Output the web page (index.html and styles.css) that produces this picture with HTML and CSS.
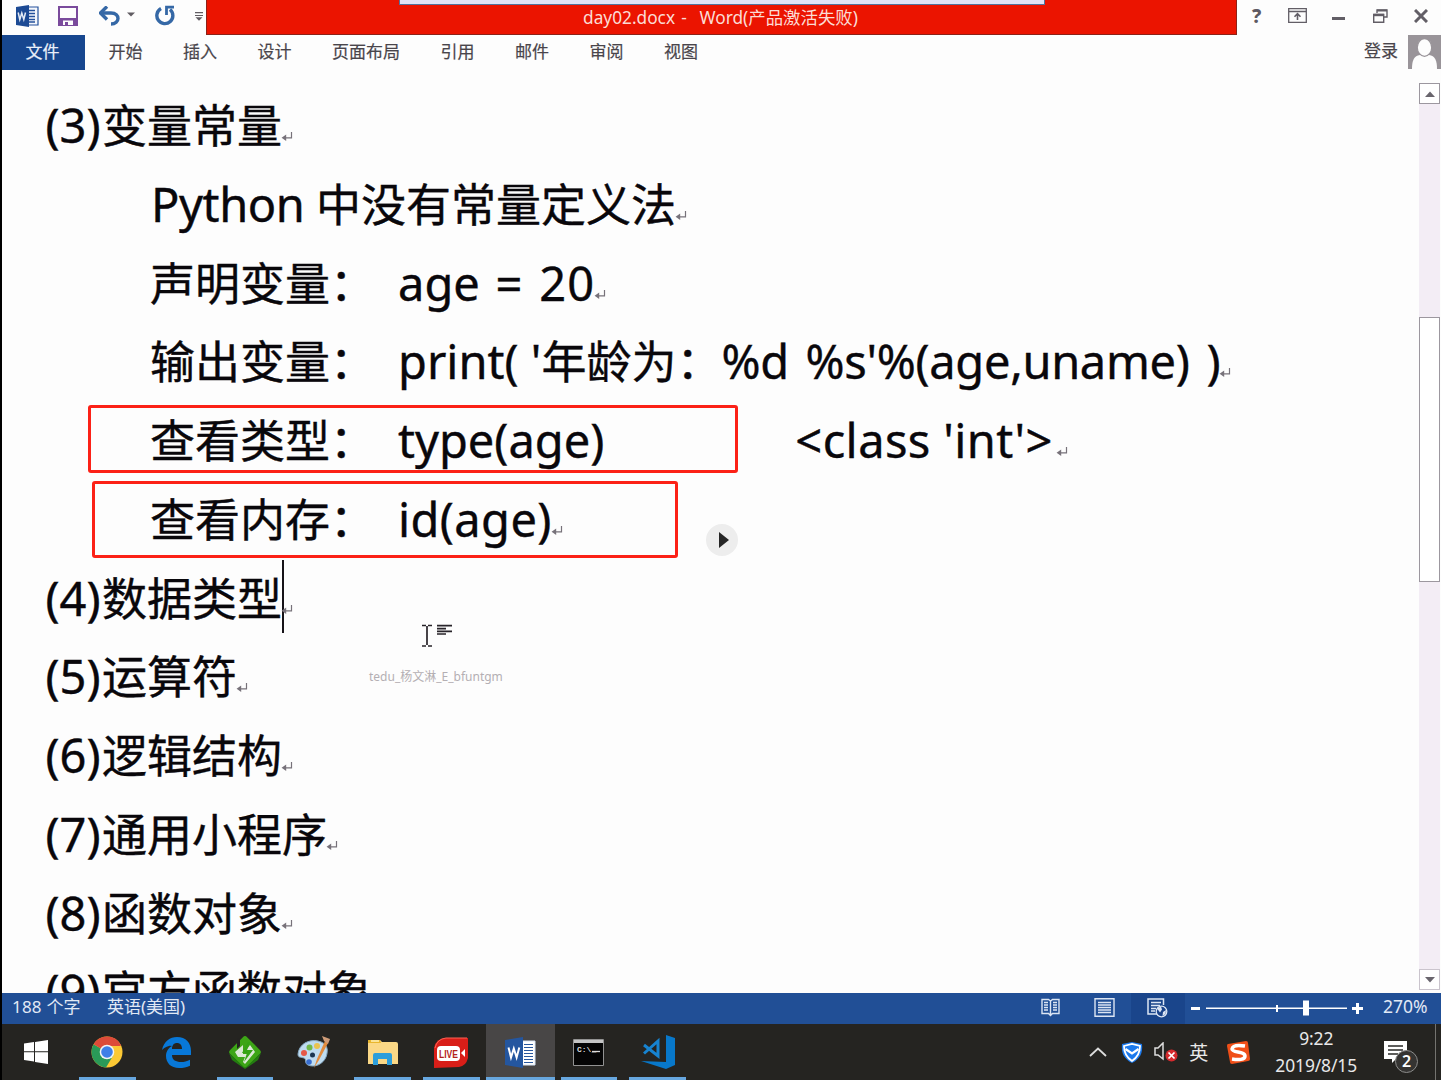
FILE: index.html
```html
<!DOCTYPE html>
<html lang="zh-CN">
<head>
<meta charset="utf-8">
<title>day02.docx - Word</title>
<link rel="stylesheet" href="styles.css">
</head>
<body>
<svg class="defs" width="0" height="0"><defs>
<symbol id="ret" viewBox="0 0 12 12"><path d="M10.5 1v5.8H3" fill="none" stroke="#77727a" stroke-width="1.2"/><path d="M5.2 3.6v6.4L.6 6.8z" fill="#77727a"/></symbol>
</defs></svg>
<div class="screen">
  <header class="titlebar">
    <div class="quick">
      <svg width="24" height="24" viewBox="0 0 24 24"><path d="M11 3h12v18H11z" fill="#f4f7fc" stroke="#24519b" stroke-width="1.2"/><path d="M14 6.5h6M14 9.5h6M14 12.500h6M14 15.500h6M14 18h6" stroke="#24519b" stroke-width="1.300"/><path d="M1 3l13-2v22L1 21z" fill="#1c4a94"/><path d="M3.200 8.500l1.600 7 2-6.500 2 6.500 1.700-7" fill="none" stroke="#e4ebf5" stroke-width="1.500"/></svg>
      <svg class="save" width="20" height="20" viewBox="0 0 20 20"><path d="M1 1h18v18H1z" fill="#fdfdfd" stroke="#7a4a9c" stroke-width="2"/><path d="M1 12h18v7H1z" fill="#7a4a9c"/><path d="M5 14.500h10V19H5z" fill="#fdfdfd"/><path d="M7 16h3v3H7z" fill="#7a4a9c"/></svg>
      <svg class="undo" width="21" height="20" viewBox="0 0 21 20"><path d="M3 7h9c5 0 7 3 7 5.500S16.500 18 12 18" fill="none" stroke="#3568a6" stroke-width="3.400"/><path d="M8 .5L1.500 7 8 13.500" fill="none" stroke="#3568a6" stroke-width="3.400"/></svg>
      <svg class="drop" width="8" height="5" viewBox="0 0 8 5"><path d="M0 .5h8l-4 4z" fill="#605c62"/></svg>
      <svg class="redo" width="20" height="21" viewBox="0 0 20 21"><path d="M6 3.600A8 8 0 1 0 15 4.500" fill="none" stroke="#3568a6" stroke-width="3.400"/><path d="M11.500 10V2.200h7.500" fill="none" stroke="#3568a6" stroke-width="2.800"/></svg>
      <svg class="more" width="8" height="9" viewBox="0 0 8 9"><path d="M0 .7h8M0 3.500h8" stroke="#605c62" stroke-width="1.200"/><path d="M.5 5.200h7L4 8.800z" fill="#605c62"/></svg>
    </div>
    <div class="caption">
      <div class="dock"></div>
      <span>day02.docx -&nbsp; Word<span class="zh">(产品激活失败)</span></span>
    </div>
    <div class="controls">
      <span class="help">?</span>
      <svg width="19" height="15" viewBox="0 0 19 15"><path d="M.7.700h17.600v13.600H.7zM1 3.500h17" fill="none" stroke="#625e66" stroke-width="1.300"/><path d="M9.500 12V6M6.500 8.700l3-3 3 3" fill="none" stroke="#625e66" stroke-width="1.600"/></svg>
      <svg class="min" width="13" height="3"><path d="M0 0h13v3H0z" fill="#625e66"/></svg>
      <svg class="restore" width="15" height="14" viewBox="0 0 15 14"><path d="M4 4V1h10v7h-3" fill="none" stroke="#625e66" stroke-width="1.400"/><path d="M4 1.500h10" stroke="#625e66" stroke-width="2"/><path d="M.7 5.500h10v7.700H.7z" fill="#fdfdfd" stroke="#625e66" stroke-width="1.400"/><path d="M.5 6h10.500" stroke="#625e66" stroke-width="2.400"/></svg>
      <svg class="close" width="14" height="14" viewBox="0 0 14 14"><path d="M1 1l12 12M13 1L1 13" stroke="#625e66" stroke-width="3"/></svg>
    </div>
  </header>
  <nav class="tabs">
    <span class="file">文件</span>
    <div class="tablist"><span>开始</span><span>插入</span><span>设计</span><span>页面布局</span><span>引用</span><span>邮件</span><span>审阅</span><span>视图</span></div>
    <span class="login">登录</span>
    <svg class="avatar" width="33" height="34" viewBox="0 0 33 34"><path d="M0 0h33v34H0z" fill="#999499"/><path d="M4 34c0-9 2-13 8-14h9c6 1 8 5 8 14z" fill="#fdfdfd"/><ellipse cx="16.500" cy="12.500" rx="7.200" ry="8.800" fill="#fdfdfd" stroke="#999499" stroke-width="1.200"/></svg>
  </nav>
  <main class="workspace">
    <article class="doc">
      <p><b class="num">(3)</b>变量常量<svg class="ret"><use href="#ret"/></svg></p>
      <p class="in"><b class="py">Python </b>中没有常量定义法<svg class="ret"><use href="#ret"/></svg></p>
      <p class="in">声明变量：<b class="code eq">age = <i>20</i></b><svg class="ret"><use href="#ret"/></svg></p>
      <p class="in">输出变量：<b class="code">print( '</b>年龄为：<b class="fmt">%d %s'%(age,uname) )</b><svg class="ret"><use href="#ret"/></svg></p>
      <p class="in">查看类型：<b class="code">type(age)</b><b class="cls">&lt;class 'int'&gt;</b><svg class="ret gap"><use href="#ret"/></svg></p>
      <p class="in">查看内存：<b class="code idc">id(age)</b><svg class="ret"><use href="#ret"/></svg></p>
      <p><b class="num">(4)</b>数据类型<span class="caret"></span><svg class="ret"><use href="#ret"/></svg></p>
      <p><b class="num">(5)</b>运算符<svg class="ret"><use href="#ret"/></svg></p>
      <p><b class="num">(6)</b>逻辑结构<svg class="ret"><use href="#ret"/></svg></p>
      <p><b class="num">(7)</b>通用小程序<svg class="ret"><use href="#ret"/></svg></p>
      <p><b class="num">(8)</b>函数对象<svg class="ret"><use href="#ret"/></svg></p>
      <p><b class="num">(9)</b>官方函数对象</p>
    </article>
    <div class="scroll">
      <span class="arrow"><svg width="10" height="6"><path d="M0 6l5-5.500L10 6z" fill="#69656d"/></svg></span>
      <div class="track"><div class="thumb"></div></div>
      <span class="arrow down"><svg width="10" height="6"><path d="M0 0h10L5 5.500z" fill="#69656d"/></svg></span>
    </div>
  </main>
  <footer class="status">
    <span class="words">188 个字</span><span class="lang">英语(美国)</span>
    <div class="views">
      <svg class="read" width="19" height="19" viewBox="0 0 19 19" fill="none" stroke="#dce5f3"><path d="M9.500 3L7.500 1.500H1v14h6.500l2 2 2-2H18v-14h-6.500zv15" stroke-width="1.400"/><path d="M3 4.500h4M3 7h4M3 9.500h4M3 12h4M12 4.500h4M12 7h4M12 9.500h4M12 12h4" stroke-width="1.300"/></svg>
      <svg class="print" width="21" height="19" viewBox="0 0 21 19" fill="none" stroke="#dce5f3"><path d="M1 .8h19v17.400H1z" stroke-width="1.400"/><path d="M4 4.500h13M4 7h13M4 9.500h13M4 12h13M4 14.500h13" stroke-width="1.300"/></svg>
      <span class="web"><svg width="21" height="20" viewBox="0 0 21 20" fill="none" stroke="#dce5f3"><path d="M10 16H1V1h15.500v6" stroke-width="1.500"/><path d="M4 4.500h10M4 7.500h9M4 10.500h5M4 13h4" stroke-width="1.300"/><circle cx="14.500" cy="13.500" r="5.300" fill="#1a438a" stroke-width="1.300"/><path d="M10 10.500l4-2 1 3-2 3zM16 14l3-2-.5 4-3 2z" fill="#dce5f3" stroke="none"/></svg></span>
    </div>
    <svg class="slider" width="172" height="18" viewBox="0 0 172 18" fill="#fff"><path d="M0 8h9v3H0zM15 8.500h141v1.500H15zM85 6h2v7h-2zM112 1.500h6v15h-6zM161 8h11v3h-11zM165 4h3v11h-3z"/></svg>
    <span class="zoom">270%</span>
  </footer>
  <div class="taskbar">
    <div class="start"><svg width="24" height="24" viewBox="0 0 24 24" fill="#fff"><path d="M0 3.500l10-1.500v9.300H0zM11 1.900L24 0v11.300H11zM0 12.300h10v9.200L0 20zM11 12.300h13V24l-13-2z"/></svg></div>
    <div class="app on"><svg width="32" height="32" viewBox="0 0 32 32"><circle cx="16" cy="16" r="15.500" fill="#fcc934"/><path d="M16 16L2.600 8.200A15.500 15.500 0 0 0 15 31.500L22.500 19z" fill="#2a9a58"/><path d="M16 16L2.600 8.200a15.500 15.500 0 0 1 27 .3H16z" fill="#dd4b39"/><path d="M16 9h13.600" stroke="#dd4b39" stroke-width="2"/><circle cx="16" cy="16" r="7.300" fill="#f4f4f4"/><circle cx="16" cy="16" r="5.800" fill="#3f7fe8"/></svg></div>
    <div class="app"><svg width="29" height="31" viewBox="0 0 29 31"><path d="M0 13C2 4 8 0 15 0c9 0 14 6 14 14v4H10c0 5 4 7 9 7 3 0 6-.7 9-2.300v6C25 30.300 21 31 17 31 9 31 4 26 4 19c0-5 3-9 7-10.500C6 8.500 3 10 0 13zm10-1h10c0-4-2-6-5-6s-5 2-5 6z" fill="#0878d8"/></svg></div>
    <div class="app on"><svg width="34" height="34" viewBox="0 0 34 34"><rect x="5" y="5" width="24" height="24" rx="3" transform="rotate(45 17 17)" fill="#3da516"/><path d="M1 18l16 15 16-15-3 7-13 9L4 25z" fill="#237d10"/><path d="M9 3h3v8l-3 3z" fill="#242321"/><path d="M7 17l8-7v9l4 0v-5l3-4 5 7-10 12-2-2 2-5h-7z" fill="#dce8d6"/><path d="M20 7l-6 11h5l-3 9 9-12h-6l3-8z" fill="#35a315"/></svg></div>
    <div class="app"><svg width="34" height="34" viewBox="0 0 34 34"><path d="M1 19C2 9 12 4 21 6c9 2 11 8 8 16-3 7-11 11-18 8-4-2-1-6-4-7s-6 0-6-4z" fill="#bfdcf0" stroke="#86a9c3"/><circle cx="7" cy="18" r="3" fill="#e55847"/><circle cx="12.500" cy="12.500" r="3" fill="#70b94b"/><circle cx="20" cy="11" r="3" fill="#e9c350"/><circle cx="15.500" cy="20" r="2.500" fill="#1c3651"/><circle cx="12" cy="27" r="2.800" fill="#386ed1"/><path d="M17 33l3-9L28 6l3 2-9 17z" fill="#e28c3f"/><path d="M27 6l-2-5 8 3-2 5z" fill="#cf9c78"/></svg></div>
    <div class="app on"><svg width="31" height="27" viewBox="0 0 31 27"><path d="M1 2Q1 1 2 1h11l2 2h14q2 0 2 2v20H1z" fill="#fbd886"/><path d="M1 1h12l1 3H1z" fill="#e9b62e"/><path d="M4 2h8" stroke="#fff1b7" stroke-width="1.500"/><path d="M6 26V16q0-2 2-2h15q2 0 2 2v10h-5v-6h-9v6z" fill="#2d9edb"/></svg></div>
    <div class="app on"><svg width="34" height="31" viewBox="0 0 34 31"><path d="M0 31V11Q2 1 12 1h22v20q-2 8-9 9z" fill="#d91e18"/><path d="M1 11Q3 2 12 1h21" fill="none" stroke="#ff6255"/><rect x="3" y="9" width="23" height="15" rx="4" fill="#fff"/><path d="M27 16l4-4v8z" fill="#fff"/><text x="14.500" y="20.500" class="live" textLength="19" lengthAdjust="spacingAndGlyphs">LIVE</text></svg></div>
    <div class="app on active"><svg width="31" height="31" viewBox="0 0 31 31"><path d="M16 4h14v24H16z" fill="#fff" stroke="#d6e3f5"/><path d="M19 7.500h9M19 10.500h9M19 13.500h9M19 16.500h9M19 19.500h9M19 22.500h9M19 25.500h9" stroke="#27579e" stroke-width="1.200"/><path d="M0 3l18-3v31L0 28z" fill="#24569f"/><path d="M3.500 10.500l2.500 10 2.800-9 2.800 9 2.700-10" fill="none" stroke="#fff" stroke-width="2"/></svg></div>
    <div class="app on"><svg width="31" height="27" viewBox="0 0 31 27"><path d="M.5.500h30v26H.5z" fill="#050505" stroke="#929292"/><path d="M1 1h29v3H1z" fill="#c5c5c5"/><text x="4" y="13" class="cmd">C:\_</text><path d="M19 12.500h8" stroke="#ddd" stroke-width="1.300"/></svg></div>
    <div class="app on"><svg width="34" height="34" viewBox="0 0 34 34"><path d="M25 0l9 3v27l-9 4L0 26l25 1z" fill="#0878ca"/><path d="M3 10l14 11V6L3 18.500" fill="none" stroke="#1783d0" stroke-width="3"/></svg></div>
    <div class="tray">
      <svg width="18" height="10" viewBox="0 0 18 10"><path d="M1 9l8-7.500L17 9" fill="none" stroke="#ddd" stroke-width="1.800"/></svg>
      <svg class="shield" width="22" height="23" viewBox="0 0 22 23"><path d="M1 3l10-2 10 2c1 9-2 15-10 19C3 18 0 12 1 3z" fill="#1c7aed"/><path d="M3 5l8-2 8 2c0 7-2 11-8 15C5 16 3 12 3 5z" fill="#1c7aed" stroke="#fff" stroke-width="1.800"/><path d="M4.500 8l6.500 4.500L17.500 8" fill="none" stroke="#fff" stroke-width="2.200"/></svg>
      <svg class="vol" width="24" height="20" viewBox="0 0 24 20"><path d="M1 6h3l5-5v16l-5-4H1z" fill="none" stroke="#ddd" stroke-width="1.500"/><circle cx="17.500" cy="13.500" r="6" fill="#d52a2d"/><path d="M14.500 10.500l6 6M20.500 10.500l-6 6" stroke="#fff" stroke-width="1.700"/></svg>
      <span class="ime">英</span>
      <svg class="sogou" width="23" height="23" viewBox="0 0 23 23"><path d="M1 3L19 0q2 0 2 2l2 16q0 2-2 2L5 23q-2 0-2-2L0 5q0-2 1-2z" fill="#f04f18"/><path d="M18 5Q6 3 5 8c0 4 13 2 13 7 0 4-7 4-13 3" fill="none" stroke="#fff" stroke-width="3.500"/></svg>
      <div class="clock"><span>9:22</span><span>2019/8/15</span></div>
      <div class="notice"><svg width="23" height="23" viewBox="0 0 23 23"><path d="M0 0h23v18H12l-4 4v-4H0z" fill="#fff"/><path d="M4 5h15M4 9h15M4 13h10" stroke="#292826" stroke-width="1.500"/></svg><span>2</span></div>
    </div>
  </div>
  <div class="mark mark-type"></div>
  <div class="mark mark-id"></div>
  <svg class="play" width="32" height="32"><circle cx="16" cy="16" r="16" fill="#ededed"/><path d="M13 8l10 8-10 8z" fill="#252525"/></svg>
  <svg class="pointer" width="31" height="24" viewBox="0 0 31 24"><path d="M0 1.500h4M6 1.500h4M5 2v19M0 22h4M6 22h4" stroke="#28242a" stroke-width="1.700"/><path d="M15 1.700h15M15 4.700h9M15 7.300h15M15 10h9" stroke="#28242a" stroke-width="1.700"/></svg>
  <span class="watermark">tedu_杨文淋_E_bfuntgm</span>
</div>
</body>
</html>
```
FILE: styles.css
```css
* { box-sizing: border-box; }
body { margin: 0; font-family: "Noto Sans", "Noto Sans CJK SC", sans-serif; color: #49454b; overflow: hidden; }
svg { display: block; flex: none; }
.defs { position: absolute; }
.screen { position: relative; width: 1441px; height: 1080px; background: #fdfdfd; border-left: 2px solid #000; display: flex; flex-direction: column; overflow: hidden; }

.titlebar { height: 35px; display: flex; }
.quick { width: 204px; height: 31px; padding-left: 13px; display: flex; align-items: center; }
.save { margin-left: 19px; }
.undo { margin-left: 21px; }
.drop { margin: 0 0 2px 7px; }
.redo { margin-left: 20px; }
.more { margin: 2px 0 0 20px; }
.caption { width: 1031px; height: 35px; background: #eb1400; border: solid #8c2218; border-width: 0 1px 1px; display: flex; flex-direction: column; color: #fbdcd5; font-size: 17.300px; line-height: 24px; white-space: pre; word-spacing: 1.800px; }
.caption > span { padding-left: 376px; }
.zh { font-size: 17.400px; }
.dock { width: 646px; height: 5px; margin-left: 192px; background: #e2e3f6; border: solid #52749f; border-width: 0 1px 1px; }
.controls { height: 31px; display: flex; align-items: center; color: #5d5962; padding-left: 15px; }
.help { font-size: 19px; font-weight: 800; width: 36px; }
.min { margin: 5px 0 0 25px; }
.restore { margin-left: 28px; }
.close { margin-left: 26px; }

.tabs { height: 35px; display: flex; font-size: 17px; line-height: 32px; }
.tabs span { font-family: "Noto Sans CJK SC", sans-serif; -webkit-text-stroke: .2px; }
.file { width: 83px; padding-right: 2px; background: #17478f; color: #eaf0fa; text-align: center; }
.tablist { display: flex; gap: 40.500px; padding-left: 23.500px; flex: 1; }
.login { line-height: 30px; margin-right: 10px; }

.workspace { height: 923px; display: flex; overflow: hidden; }
.doc { flex: 1; padding: 15px 0 0 43.500px; color: #09070b; font: 45px/78.750px "Noto Sans CJK SC", sans-serif; -webkit-text-stroke: .4px; }
.doc p { margin: 0; height: 78.750px; display: flex; align-items: baseline; white-space: pre; }
.doc b { font: 400 47px/78.750px "Noto Sans", sans-serif; }
.doc i { font-style: normal; letter-spacing: 1px; margin-left: 1px; }
.doc .in { padding-left: 104.500px; }
.num { width: 56.500px; }
.py { width: 166px; padding-left: 1px; letter-spacing: -.4px; }
.code { margin-left: 23px; }
.eq { word-spacing: 3.600px; }
.fmt { letter-spacing: -.32px; word-spacing: 5px; }
.cls { margin-left: 191px; letter-spacing: .4px; }
.doc .idc { letter-spacing: .4px; }
.ret { width: 12px; height: 12px; margin: 0 0 1px -1px; }
.gap { margin-left: 3px; }
.caret { width: 1.500px; height: 73px; margin: 0 -1.500px 0 0; background: #161318; align-self: center; }
.scroll { width: 22px; padding: 13px 1px 3px 0; display: flex; flex-direction: column; }
.arrow { height: 21px; border: 1.500px solid #9c979f; background: #fff; display: flex; align-items: center; justify-content: center; }
.down { border-color: #cac4cd; }
.track { flex: 1; background: #f3edf5; padding-top: 213px; }
.thumb { height: 265px; background: #fff; border: 1px solid #9c979f; }

.status { height: 31px; background: #214f96; color: #e1e9f5; font-size: 17px; line-height: 27px; display: flex; flex: none; }
.words { width: 105px; padding-left: 10px; letter-spacing: .2px; }
.lang { width: 934px; }
.views { display: flex; width: 144px; }
.read { margin-top: 5px; }
.print { margin: 5px 16px 0 34px; }
.web { width: 54px; background: #1a458b; padding: 5px 0 0 16px; }
.slider { margin-top: 6px; margin-left: 6px; }
.zoom { margin-left: 20px; font-size: 17.500px; }

.taskbar { height: 56px; background: #252421; display: flex; flex: none; }
.start { width: 71px; display: flex; align-items: center; padding-left: 22px; }
.app { position: relative; width: 68.800px; display: flex; align-items: center; justify-content: center; }
.on::after { content: ""; position: absolute; left: 6px; right: 6px; bottom: 0; height: 3px; background: #67a7df; }
.active { background: #484646; }
.active::after { left: 0; right: 0; }
.live { font: bold 11px "Liberation Sans", sans-serif; fill: #b4221b; text-anchor: middle; }
.cmd { font: bold 8px "Liberation Mono", monospace; fill: #ddd; }
.tray { flex: 1; display: flex; align-items: center; padding-left: 397px; border-right: 1px solid #74736f; margin-right: 5px; color: #e9e9e9; }
.shield { margin-left: 14px; }
.vol { margin-left: 11px; }
.ime { font: 19px/28px "Noto Sans CJK SC", sans-serif; margin-left: 11px; }
.sogou { margin-left: 19px; }
.clock { width: 84px; margin-left: 24px; display: flex; flex-direction: column; align-items: center; font-size: 17.400px; line-height: 27px; letter-spacing: -.1px; }
.notice { position: relative; margin-left: 26px; }
.notice span { position: absolute; left: 11px; top: 9px; width: 23px; height: 23px; border: 1.500px solid #8c8c8b; border-radius: 50%; background: #353432; color: #fff; font-size: 16px; font-weight: 600; line-height: 20px; text-align: center; }

.mark { position: absolute; border: 3px solid #fc2117; border-radius: 3px; }
.mark-type { left: 86px; top: 405px; width: 650px; height: 68px; }
.mark-id { left: 90px; top: 481px; width: 586px; height: 77px; }
.play { position: absolute; left: 704px; top: 524px; }
.pointer { position: absolute; left: 420px; top: 624px; }
.watermark { position: absolute; left: 367px; top: 668px; font-size: 12px; line-height: 18px; color: #b4afb3; }
```
